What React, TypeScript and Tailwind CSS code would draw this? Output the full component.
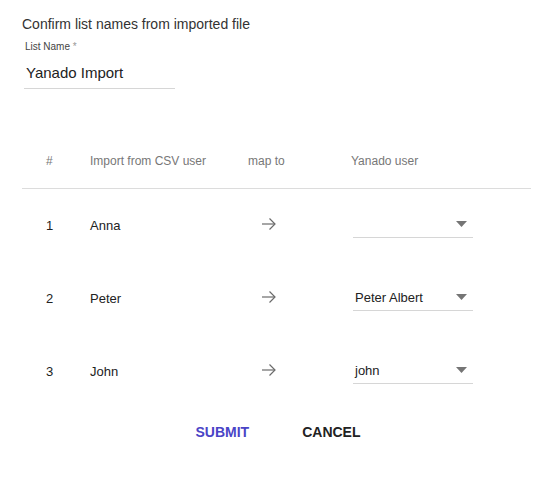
import React from "react";

const rows = [
  { n: 1, name: "Anna", value: "" },
  { n: 2, name: "Peter", value: "Peter Albert" },
  { n: 3, name: "John", value: "john" },
];

function Arrow() {
  return (
    <svg width="16" height="14" viewBox="0 0 16 14" fill="none" stroke="#6b6b6b" strokeWidth="1.2">
      <path d="M1 7h13" />
      <path d="M8.5 1.5L14 7l-5.5 5.5" />
    </svg>
  );
}

export default function App() {
  return (
    <div className="w-[553px] h-[500px] bg-white text-[#222] font-['Liberation_Sans',Arial,sans-serif]">
      <div className="pt-[16px] pl-[22px] text-[14px] leading-[16px] text-[#333]">
        Confirm list names from imported file
      </div>
      <div className="ml-[24px] mt-[9px] w-[151px]">
        <div className="pl-[1px] text-[10px] leading-[12px] text-[#444]">
          List Name <span className="text-[#999]">*</span>
        </div>
        <div className="mt-[11px] pl-[2px] pb-[6px] text-[15px] leading-[18px] text-[#222] border-b border-[#d6d6d6]">
          Yanado Import
        </div>
      </div>

      <div className="mx-[22px] mt-[47px] w-[509px]">
        <div className="grid grid-cols-[68px_158px_103px_1fr] h-[53px] items-center border-b border-[#dcdcdc] text-[12px] text-[#777] pb-[2px]">
          <div className="pl-[24px]">#</div>
          <div>Import from CSV user</div>
          <div>map to</div>
          <div>Yanado user</div>
        </div>
        {rows.map((r) => (
          <div key={r.n} className="grid grid-cols-[68px_158px_103px_1fr] h-[73px] items-center text-[13px] text-[#222]">
            <div className="pl-[24px]">{r.n}</div>
            <div>{r.name}</div>
            <div className="pl-[13px] pb-[4px]">
              <Arrow />
            </div>
            <div className="pl-[2px]">
              <div className="w-[120px] h-[24px] flex items-center justify-between border-b border-[#d6d6d6] pl-[2px] pr-[6px]">
                <span className="leading-[16px]">{r.value}</span>
                <svg width="11" height="6" viewBox="0 0 11 6" className="mb-[2px]">
                  <path d="M0 0h11L5.5 6z" fill="#757575" />
                </svg>
              </div>
            </div>
          </div>
        ))}
      </div>

      <div className="flex justify-center gap-[53px] mt-[14px] pl-[3px] text-[14px] font-bold">
        <button className="text-[#4a44c6] uppercase">Submit</button>
        <button className="text-[#222] uppercase">Cancel</button>
      </div>
    </div>
  );
}
